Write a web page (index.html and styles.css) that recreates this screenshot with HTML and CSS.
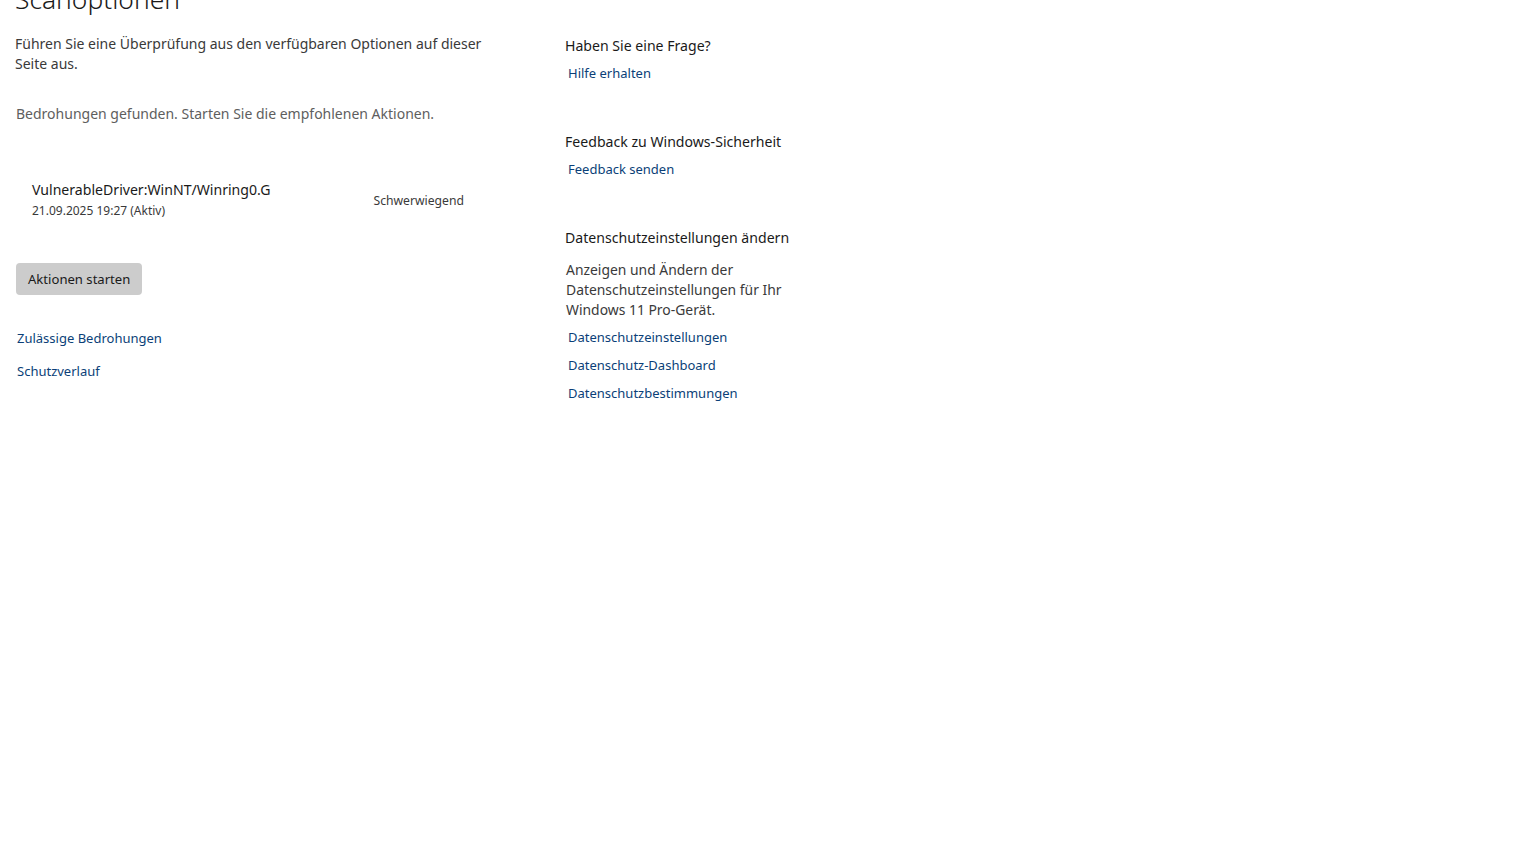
FILE: index.html
```html
<!DOCTYPE html>
<html lang="de">
<head>
  <meta charset="UTF-8">
  <title>Viren- &amp; Bedrohungsschutz</title>
  <link rel="stylesheet" href="styles.css">
</head>
<body>
  <div class="page">
    <main class="main">
      <h1>Scanoptionen</h1>
      <p class="intro">Führen Sie eine Überprüfung aus den verfügbaren Optionen auf dieser Seite aus.</p>
      <p class="status">Bedrohungen gefunden. Starten Sie die empfohlenen Aktionen.</p>
      <div class="threat">
        <div class="threat-info">
          <div class="threat-name">VulnerableDriver:WinNT/Winring0.G</div>
          <div class="threat-date">21.09.2025 19:27 (Aktiv)</div>
        </div>
        <div class="threat-level">Schwerwiegend</div>
      </div>
      <button class="btn">Aktionen starten</button>
      <div class="links">
        <a href="#">Zulässige Bedrohungen</a>
        <a href="#">Schutzverlauf</a>
      </div>
    </main>
    <aside class="side">
      <section class="block">
        <h2>Haben Sie eine Frage?</h2>
        <a href="#">Hilfe erhalten</a>
      </section>
      <section class="block">
        <h2>Feedback zu Windows-Sicherheit</h2>
        <a href="#">Feedback senden</a>
      </section>
      <section class="block">
        <h2>Datenschutzeinstellungen ändern</h2>
        <p>Anzeigen und Ändern der Datenschutzeinstellungen für Ihr Windows 11 Pro-Gerät.</p>
        <a href="#">Datenschutzeinstellungen</a>
        <a href="#">Datenschutz-Dashboard</a>
        <a href="#">Datenschutzbestimmungen</a>
      </section>
    </aside>
  </div>
</body>
</html>
```

FILE: styles.css
```css
* { box-sizing: border-box; }
body {
  margin: 0;
  background: #fff;
  color: #1f1f1f;
  font-family: "Noto Sans", "Open Sans", sans-serif;
  overflow: hidden;
}
.page {
  display: flex;
  padding: 0 0 0 15px;
}
.main { width: 550px; }
h1 {
  margin: -20px 0 0;
  font-size: 26.4px;
  font-weight: 300;
  line-height: 38px;
  color: #1a1a1a;
}
.intro {
  width: 490px;
  margin: 16px 0 0;
  font-size: 14px;
  line-height: 20px;
  color: #3a3a3a;
}
.status {
  margin: 30px 0 0 1px;
  font-size: 14px;
  line-height: 20px;
  color: #5e5e5e;
}
.threat {
  display: flex;
  align-items: center;
  width: 432px;
  margin: 56px 0 0 17px;
}
.threat-info { flex: 1; }
.threat-name {
  font-size: 14.1px;
  line-height: 20px;
  color: #1a1a1a;
}
.threat-date {
  font-size: 12px;
  line-height: 19px;
  padding-top: 1px;
  color: #3a3a3a;
}
.threat-level {
  font-size: 12.2px;
  color: #3a3a3a;
}
.btn {
  display: block;
  margin: 43px 0 0 1px;
  height: 32px;
  padding: 0 12px;
  border: none;
  border-radius: 4px;
  background: #cccccc;
  font-family: inherit;
  font-size: 13.1px;
  color: #1a1a1a;
}
.links {
  display: flex;
  flex-direction: column;
  gap: 13px;
  margin: 33px 0 0 2px;
}
a {
  font-size: 13px;
  line-height: 20px;
  color: #0b3f78;
  text-decoration: none;
}
.side {
  width: 260px;
  padding-top: 36px;
}
.block {
  display: flex;
  flex-direction: column;
  align-items: flex-start;
  margin-bottom: 49px;
}
.block h2 {
  margin: 0 0 7px;
  font-size: 14.1px;
  font-weight: 400;
  line-height: 20px;
  color: #1a1a1a;
}
.block p {
  width: 240px;
  margin: 5px 0 7px 1px;
  font-size: 13.9px;
  line-height: 20px;
  color: #3a3a3a;
}
.block a { margin-left: 3px; }
.block p ~ a { margin-bottom: 8px; }
```
